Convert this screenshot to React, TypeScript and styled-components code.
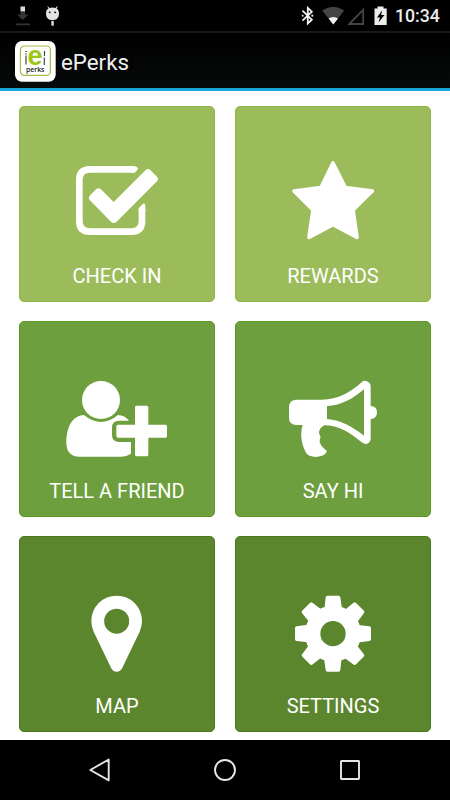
import React from "react";
import styled, { createGlobalStyle } from "styled-components";

const GlobalStyle = createGlobalStyle`
  * { box-sizing: border-box; }
  body { margin: 0; background: #fff; font-family: Roboto, sans-serif; }
  svg { display: block; flex: none; }
`;

const Screen = styled.div`
  display: flex;
  flex-direction: column;
  width: 450px;
  height: 800px;
  overflow: hidden;
  background: #fff;
`;

const StatusBar = styled.header`
  display: flex;
  justify-content: space-between;
  height: 31px;
  flex: none;
  background: #000;
`;

const StatusRight = styled.div`
  display: flex;
`;

const Clock = styled.span`
  width: 55px;
  color: #ececec;
  font-size: 17.700px;
  font-weight: 500;
  line-height: 33px;
  white-space: nowrap;
`;

const ActionBar = styled.div`
  display: flex;
  align-items: center;
  height: 60px;
  flex: none;
  padding: 2px 0 0 15px;
  gap: 5px;
  background: linear-gradient(#000, #07090a);
  border-top: 2px solid #191919;
  border-bottom: 3px solid #18a7dc;
`;

const Title = styled.h1`
  margin: 0;
  color: #f0f0f0;
  font-size: 22.300px;
  font-weight: 400;
  line-height: 30px;
`;

const Grid = styled.main`
  display: grid;
  grid-template-columns: 196px 196px;
  grid-auto-rows: 196px;
  gap: 19px 20px;
  height: 649px;
  flex: none;
  padding: 15px 19px 8px;
`;

const Tile = styled.button<{ $fill: string; $edge: string }>`
  display: flex;
  flex-direction: column;
  align-items: center;
  padding: 48px 0 0;
  border: 1px solid ${(p) => p.$edge};
  border-radius: 5px;
  background: ${(p) => p.$fill};
  color: #fff;
  font-family: inherit;
`;

const Label = styled.span`
  margin-top: 19px;
  font-size: 20px;
  line-height: 24px;
  font-weight: 400;
  white-space: nowrap;
`;

const NavBar = styled.nav`
  height: 60px;
  flex: none;
  display: flex;
  justify-content: center;
  align-items: center;
  gap: 101px;
  background: #000;
`;

const shades = {
  light: { fill: "#9cbc5b", edge: "#92b645" },
  mid: { fill: "#6e9f3e", edge: "#5f9a25" },
  dark: { fill: "#5b862e", edge: "#477b1a" },
};

const CheckIcon = () => (
  <>
    <path
      d="M372 208H240Q208 208 208 240V363Q208 395 240 395H364Q396 395 396 363V327"
      fill="none"
      stroke="#fff"
      strokeWidth="20"
    />
    <path d="M368 198Q380 198 384 204Q385 207 381 211L374 218H364V198ZM386 336V325L398 312Q406 308 406 318V336Z" />
    <path d="M239 287L258 268Q265 261 273 268L311 306L407 210Q414 204 421 210L441 230Q447 237 441 244L320 365Q311 373 303 365L239 300Q234 293 239 287Z" />
  </>
);

const StarIcon = () => (
  <path
    d="M309 189L346 263L427 273L369 330L381 412L309 374L237 412L249 330L192 273L273 263Z"
    stroke="#fff"
    strokeWidth="11"
    strokeLinejoin="round"
  />
);

const FriendIcon = () => (
  <>
    <circle cx="273" cy="255" r="57" />
    <path d="M222 300Q273 342 324 300Q344 301 357 317H327Q306 317 306 338V360Q306 381 327 381H363V416Q350 425 333 425H208Q169 423 169 383C170 336 186 302 222 300Z" />
    <path d="M379 272H410Q415 272 415 277V329H466Q471 329 471 334V363Q471 368 466 368H415V419Q415 424 410 424H380Q375 424 375 419V368H324Q319 368 319 363V334Q319 329 324 329H375V277Q375 272 379 272Z" />
  </>
);

const MegaphoneIcon = () => (
  <path
    fillRule="evenodd"
    d="M197 254H276C325 254 360 233 395 202Q402 195 411 199Q422 204 422 214V273Q441 274 441 292Q441 311 422 312V373Q420 385 408 387Q402 387 395 382C360 353 325 331 283 331Q268 339 267 352Q268 360 272 366Q268 373 269 382Q275 397 291 408Q286 424 258 426Q235 425 229 415C215 390 209 358 218 330H197Q177 327 177 309V275Q178 256 197 254ZM291 273V312C333 315 370 337 402 362V223C370 250 335 272 291 273Z"
  />
);

const PinIcon = () => (
  <path
    fillRule="evenodd"
    d="M320 197A76 76 0 0 1 396 273Q396 290 389 305L337 413Q331 425 320 425Q309 425 303 413L251 305Q244 290 244 273A76 76 0 0 1 320 197ZM320 236A37.500 37.500 0 1 0 320 311A37.500 37.500 0 1 0 320 236Z"
  />
);

const GearIcon = () => (
  <>
    <path
      fillRule="evenodd"
      d="M309 227A84 84 0 1 1 309 395A84 84 0 1 1 309 227ZM309 273A38 38 0 1 0 309 349A38 38 0 1 0 309 273Z"
    />
    {[0, 45, 90, 135, 180, 225, 270, 315].map((angle) => (
      <path
        key={angle}
        transform={`rotate(${angle} 309 311)`}
        d="M278 240Q284 234 284 230L287 202Q287 197 293 197H325Q331 197 331 202L335 230Q335 234 341 240Z"
      />
    ))}
  </>
);

const tiles = [
  { label: "CHECK IN", shade: shades.light, Icon: CheckIcon },
  { label: "REWARDS", shade: shades.light, Icon: StarIcon },
  { label: "TELL A FRIEND", shade: shades.mid, Icon: FriendIcon },
  { label: "SAY HI", shade: shades.mid, Icon: MegaphoneIcon },
  { label: "MAP", shade: shades.dark, Icon: PinIcon },
  { label: "SETTINGS", shade: shades.dark, Icon: GearIcon },
];

const Notifications = () => (
  <svg width="70" height="31" viewBox="0 0 70 31">
    <path d="M20.500 6.500h4.500v5h-4.500z" fill="#ddd" />
    <path d="M20.500 12h4.500v2.500h3.500l-5.700 5.500-5.800-5.500h3.500zM16 23.500h14v1.700H16z" fill="#353535" />
    <path
      d="M46 13.500C46 10.800 47 9.300 48.500 8.500L47.300 6.600 48 6.200 49.400 8C51.300 7.300 53.700 7.300 55.600 8L57 6.200l.8.400-1.200 1.900C58.100 9.400 59 11 59 13.500 59 18 56.500 20.200 52.500 20.200S46 18 46 13.500Z"
      fill="#e2e2e2"
    />
    <path d="M51.300 21h2.500v4.700h-2.500z" fill="#d8d8d8" />
    <circle cx="49.700" cy="12.300" r=".9" />
    <circle cx="55.200" cy="12.300" r=".9" />
  </svg>
);

const SystemIcons = () => (
  <svg width="95" height="31" viewBox="300 0 95 31">
    <path d="M302.500 10.700l9.300 9-4 3.800V7.900l4 3.800-9.300 9" fill="none" stroke="#f4f4f4" strokeWidth="1.800" />
    <circle cx="302.700" cy="15.700" r="1" fill="#ddd" />
    <circle cx="312.300" cy="15.700" r="1.100" fill="#ddd" />
    <path d="M322.200 10.500Q333.200 3.200 344.200 10.500L333.300 24.500Z" fill="#444" />
    <path d="M328.600 18.400Q333.300 15.400 338 18.400L333.300 24.500Z" fill="#f2f2f2" />
    <path d="M349.300 24L363.200 9.800V24Z" fill="none" stroke="#444" strokeWidth="1.800" />
    <path d="M374.500 8.500H377.500V6.500H383.500V8.500H386.700V25H374.500Z" fill="#ededed" />
    <path d="M382 10.500L377 17.500H380L378.500 22.500L384.500 15H381.200Z" />
  </svg>
);

const Logo = () => (
  <svg width="41" height="41" viewBox="0 0 41 41">
    <rect width="40.700" height="40.700" rx="7" fill="#fff" />
    <rect x="5.400" y="5" width="30" height="29.400" rx="4" fill="none" stroke="#a1bd42" strokeWidth="1.200" />
    <path d="M10.200 10.500h1.600M10.200 13h1.600M11 14.500v9M29.500 10v5M29.300 16.500v7.500" stroke="#444" strokeWidth="1.200" fill="none" />
    <text
      x="12.600"
      y="24.300"
      fill="#9bc913"
      fontFamily="Liberation Sans"
      fontWeight="700"
      fontSize="28.500"
      textLength="15"
      lengthAdjust="spacingAndGlyphs"
    >
      e
    </text>
    <text
      x="10.900"
      y="31"
      fill="#222"
      fontFamily="Open Sans"
      fontWeight="600"
      fontSize="7"
      textLength="18.600"
      lengthAdjust="spacingAndGlyphs"
    >
      perks
    </text>
  </svg>
);

export default function App() {
  return (
    <Screen>
      <GlobalStyle />
      <StatusBar>
        <Notifications />
        <StatusRight>
          <SystemIcons />
          <Clock>10:34</Clock>
        </StatusRight>
      </StatusBar>
      <ActionBar>
        <Logo />
        <Title>ePerks</Title>
      </ActionBar>
      <Grid>
        {tiles.map(({ label, shade, Icon }, i) => (
          <Tile key={label} $fill={shade.fill} $edge={shade.edge}>
            <svg width="194" height="90" viewBox={`${i % 2 ? 18 : 30} 165 582 270`} fill="#fff">
              <Icon />
            </svg>
            <Label>{label}</Label>
          </Tile>
        ))}
      </Grid>
      <NavBar>
        <svg width="24" height="26" viewBox="0 0 24 26" fill="none" stroke="#e6e6e6" strokeWidth="1.900">
          <path d="M20.700 2.500V23.300L2.300 13Z" strokeLinejoin="round" />
        </svg>
        <svg width="24" height="26" viewBox="0 0 24 26" fill="none" stroke="#e6e6e6" strokeWidth="1.900">
          <circle cx="12" cy="13" r="10" />
        </svg>
        <svg width="24" height="26" viewBox="0 0 24 26" fill="none" stroke="#e6e6e6" strokeWidth="1.900">
          <rect x="3" y="4" width="18" height="18" rx=".5" />
        </svg>
      </NavBar>
    </Screen>
  );
}
